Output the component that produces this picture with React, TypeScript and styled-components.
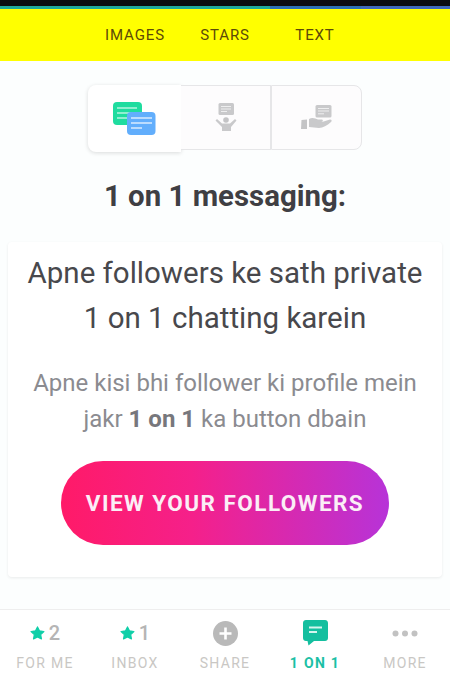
import styled, { createGlobalStyle } from "styled-components";

const GlobalStyle = createGlobalStyle`
  html, body {
    margin: 0;
    padding: 0;
    background: #fcfefe;
    font-family: Roboto, "Liberation Sans", sans-serif;
  }
`;

const ChatsIcon = () => (
  <svg width="43" height="33" viewBox="0 0 43 33">
    <rect x="0" y="0" width="29" height="23" rx="4" fill="#1fdc9f" />
    <path d="M4 6h20M4 11h20M4 16h10" stroke="#b5f3df" strokeWidth="1.600" />
    <rect x="14" y="10" width="28.500" height="23" rx="4" fill="#62aefc" />
    <path d="M18 16h21M18 21h21M18 26h11" stroke="#d9ebfe" strokeWidth="1.600" />
  </svg>
);

const PersonIcon = () => (
  <svg width="22" height="29" viewBox="0 0 22 29">
    <rect x="3.500" y="0" width="15.500" height="12" rx="1.500" fill="#c9c9cb" />
    <path d="M6 3.500h10M6 6h10M6 8.500h6" stroke="#eeeeef" strokeWidth="1" />
    <circle cx="11" cy="17" r="2.800" fill="#c4c4c6" />
    <path d="M0.500 17.500 L2 16 L7 20.500 H15 L20 16 L21.500 17.500 L16 24 V28 H7 V24 Z" fill="#c9c9cb" />
  </svg>
);

const HandIcon = () => (
  <svg width="31" height="25" viewBox="0 0 31 25">
    <rect x="14.500" y="0" width="16" height="12.500" rx="1.500" fill="#c9c9cb" />
    <path d="M17 3.500h11M17 6h11M17 8.800h6" stroke="#eeeeef" strokeWidth="1" />
    <path d="M0.500 15 L6 14.500 V24 H0 Z" fill="#c4c4c6" />
    <path d="M8 14 C11 12 14 13 17 14.500 H21 C22.500 15 22 17 20 17 H16 H21 L29 14.500 C31 14.500 31 16 30 17 C26 20.500 22 23 18 23 L8 22 Z" fill="#c9c9cb" />
  </svg>
);

const StarIcon = () => (
  <svg width="15" height="14" viewBox="0 0 24 23">
    <path
      d="M12 1.500 L15.200 8 L22.500 9 L17.200 14.100 L18.500 21.300 L12 17.900 L5.500 21.300 L6.800 14.100 L1.500 9 L8.800 8 Z"
      fill="#10cfa8"
      stroke="#10cfa8"
      strokeWidth="2"
      strokeLinejoin="round"
    />
  </svg>
);

const PlusIcon = () => (
  <svg width="25" height="25" viewBox="0 0 25 25">
    <circle cx="12.500" cy="12.500" r="12.500" fill="#b9b9b9" />
    <path d="M12.500 6.500v12M6.500 12.500h12" stroke="#ffffff" strokeWidth="2.600" />
  </svg>
);

const BubbleIcon = () => (
  <svg width="25" height="26" viewBox="0 0 25 26">
    <path
      d="M3 0 H22 C23.700 0 25 1.300 25 3 V18 C25 19.700 23.700 21 22 21 H11 L5.500 25.500 L4.500 21 H3 C1.300 21 0 19.700 0 18 V3 C0 1.300 1.300 0 3 0 Z"
      fill="#14bf9f"
    />
    <path d="M6 7.500h13M6 12h8" stroke="#d4f5ee" strokeWidth="2" />
  </svg>
);

const DotsIcon = () => (
  <svg width="26" height="7" viewBox="0 0 26 7">
    <circle cx="3.500" cy="3.500" r="3" fill="#c2c2c2" />
    <circle cx="13" cy="3.500" r="3" fill="#c2c2c2" />
    <circle cx="22.500" cy="3.500" r="3" fill="#c2c2c2" />
  </svg>
);

const App = () => {
  return (
    <Page>
      <GlobalStyle />
      <StatusStrip>
        <StripSegment $width={270} $color="#1fa79c" />
        <StripSegment $width={91} $color="#2c6fb4" />
        <StripSegment $width={89} $color="#3f68bb" />
      </StatusStrip>

      {/* top tabs */}
      <TopBar>
        <TopLink>IMAGES</TopLink>
        <TopLink>STARS</TopLink>
        <TopLink>TEXT</TopLink>
      </TopBar>

      {/* icon switcher */}
      <Switcher>
        <SwitchTab $width={93} $active>
          <ChatsIcon />
        </SwitchTab>
        <SwitchTab $width={90}>
          <PersonIcon />
        </SwitchTab>
        <SwitchTab $width={91} $last>
          <HandIcon />
        </SwitchTab>
      </Switcher>

      <Heading>1 on 1 messaging:</Heading>

      <Card>
        <CardTitle>
          Apne followers ke sath private
          <br />1 on 1 chatting karein
        </CardTitle>
        <CardText>
          Apne kisi bhi follower ki profile mein
          <br />
          jakr <strong>1 on 1</strong> ka button dbain
        </CardText>
        <FollowersButton>VIEW YOUR FOLLOWERS</FollowersButton>
      </Card>

      {/* bottom nav */}
      <BottomNav>
        <NavItem>
          <NavIcon>
            <StarIcon />
            <Count>2</Count>
          </NavIcon>
          <NavLabel>FOR ME</NavLabel>
        </NavItem>
        <NavItem>
          <NavIcon>
            <StarIcon />
            <Count>1</Count>
          </NavIcon>
          <NavLabel>INBOX</NavLabel>
        </NavItem>
        <NavItem>
          <NavIcon>
            <PlusIcon />
          </NavIcon>
          <NavLabel>SHARE</NavLabel>
        </NavItem>
        <NavItem>
          <NavIcon>
            <BubbleIcon />
          </NavIcon>
          <NavLabel $active>1 ON 1</NavLabel>
        </NavItem>
        <NavItem>
          <NavIcon>
            <DotsIcon />
          </NavIcon>
          <NavLabel>MORE</NavLabel>
        </NavItem>
      </BottomNav>
    </Page>
  );
};

export default App;

const Page = styled.div`
  width: 450px;
  height: 689px;
  overflow: hidden;
  display: flex;
  flex-direction: column;
  background: #fcfefe;
`;

const StatusStrip = styled.div`
  display: flex;
  height: 9px;
  background: #0b0b10;
  align-items: flex-end;
`;

const StripSegment = styled.div<{ $width: number; $color: string }>`
  width: ${({ $width }) => $width}px;
  height: 3px;
  background: ${({ $color }) => $color};
`;

const TopBar = styled.div`
  height: 52px;
  background: #ffff00;
  display: flex;
  justify-content: center;
  align-items: center;
`;

const TopLink = styled.span`
  width: 90px;
  text-align: center;
  font-size: 15px;
  letter-spacing: 0.9px;
  color: #5c4a08;
`;

const Switcher = styled.div`
  display: flex;
  align-self: center;
  align-items: flex-start;
  margin-top: 24px;
`;

const SwitchTab = styled.div<{ $width: number; $active?: boolean; $last?: boolean }>`
  box-sizing: border-box;
  width: ${({ $width }) => $width}px;
  height: ${({ $active }) => ($active ? "67px" : "65px")};
  display: flex;
  align-items: center;
  justify-content: center;
  background: ${({ $active }) => ($active ? "#ffffff" : "#fdfcfd")};
  border: ${({ $active }) => ($active ? "none" : "1.500px solid #e6e6e8")};
  border-left: ${({ $last }) => ($last ? "1.500px solid #e6e6e8" : "none")};
  border-radius: ${({ $active, $last }) =>
    $active ? "8px 0 0 8px" : $last ? "0 8px 8px 0" : "0"};
  box-shadow: ${({ $active }) =>
    $active ? "0 1px 4px rgba(0, 0, 0, 0.14)" : "none"};
`;

const Heading = styled.h1`
  margin: 26px 0 0;
  text-align: center;
  font-size: 29.400px;
  line-height: 36px;
  font-weight: 700;
  color: #3f3f43;
`;

const Card = styled.section`
  box-sizing: border-box;
  width: 434px;
  height: 337px;
  margin: 28px 0 0 8px;
  padding: 9px 0 0;
  background: #ffffff;
  border-radius: 4px;
  box-shadow: 0 1px 3px rgba(0, 0, 0, 0.08);
  display: flex;
  flex-direction: column;
  align-items: center;
`;

const CardTitle = styled.h2`
  margin: 0;
  text-align: center;
  font-size: 29.500px;
  line-height: 45px;
  font-weight: 400;
  color: #48484c;
`;

const CardText = styled.p`
  margin: 24px 0 0;
  text-align: center;
  font-size: 24px;
  line-height: 36px;
  font-weight: 400;
  color: #8b8b90;

  strong {
    font-weight: 700;
    color: #77777c;
  }
`;

const FollowersButton = styled.button`
  width: 328px;
  height: 84px;
  margin-top: 24px;
  border: none;
  border-radius: 42px;
  background: linear-gradient(90deg, #ff1a68 0%, #f5208a 40%, #b733d8 100%);
  color: #fbeef6;
  font-family: Roboto, "Liberation Sans", sans-serif;
  font-size: 22.500px;
  font-weight: 700;
  letter-spacing: 1.450px;
`;

const BottomNav = styled.nav`
  margin-top: 32px;
  height: 79px;
  background: #ffffff;
  border-top: 1px solid #eeeeee;
  display: grid;
  grid-template-columns: repeat(5, 90px);
`;

const NavItem = styled.div`
  display: flex;
  flex-direction: column;
  align-items: center;
`;

const NavIcon = styled.div`
  height: 26px;
  margin-top: 10px;
  display: flex;
  align-items: center;
  justify-content: center;
  gap: 4px;
`;

const Count = styled.span`
  font-size: 20px;
  font-weight: 500;
  color: #b5b5b5;
`;

const NavLabel = styled.span<{ $active?: boolean }>`
  margin-top: 9px;
  font-size: 14px;
  letter-spacing: 1.300px;
  font-weight: ${({ $active }) => ($active ? 700 : 400)};
  color: ${({ $active }) => ($active ? "#1bbfa5" : "#c9c7c4")};
`;
